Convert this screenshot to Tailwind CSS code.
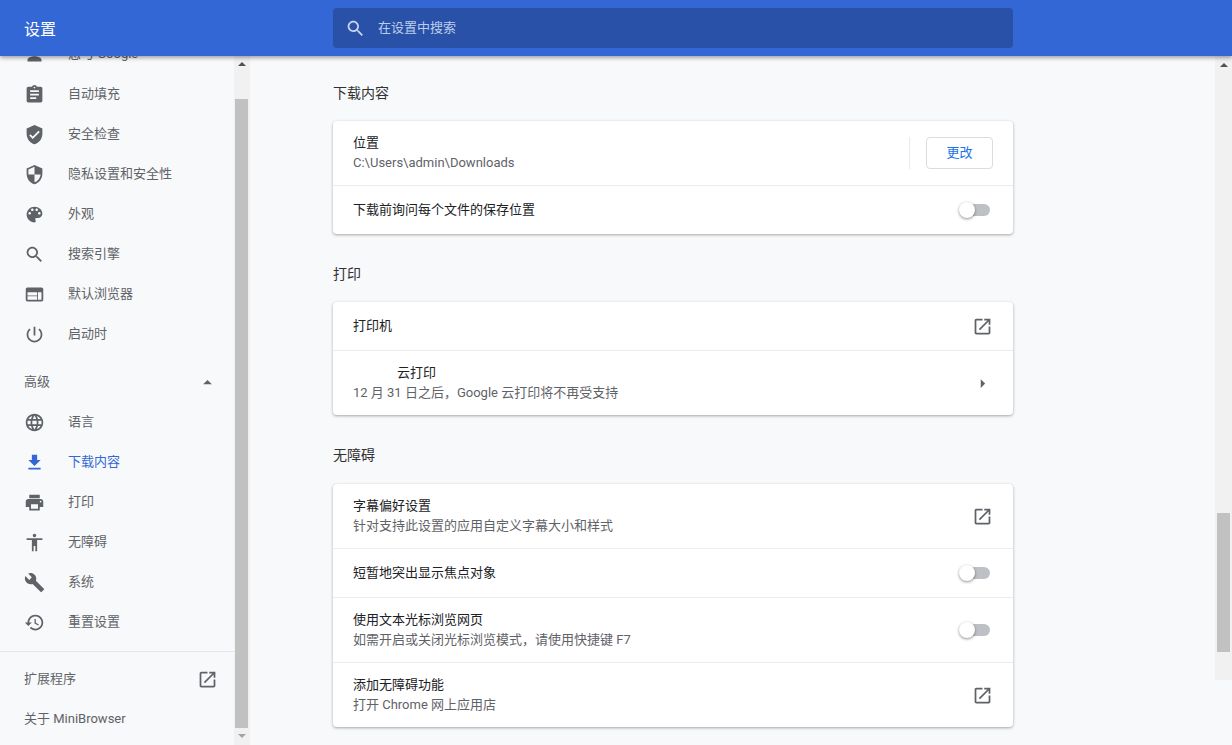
<!DOCTYPE html>
<html lang="zh">
<head>
<meta charset="utf-8">
<script src="https://cdn.jsdelivr.net/npm/@tailwindcss/browser@4"></script>
<title>设置</title>
</head>
<body class="h-[745px] w-[1232px] overflow-hidden bg-[#f8f9fa] font-['Roboto','Noto_Sans_CJK_SC',sans-serif] text-[13px] text-[#5f6368]">
<header class="relative z-10 flex h-14 items-center bg-[#3367d6] shadow-[0_2px_4px_rgba(0,0,0,0.35)]">
  <h1 class="w-[333px] pl-6 pt-1 text-base font-normal text-white">设置</h1>
  <div class="flex h-10 w-[680px] items-center rounded-sm bg-[#2a51a8]">
    <svg class="ml-3 h-[21px] w-[21px] fill-[#c6d4f0]" viewBox="0 0 24 24"><path d="M15.5 14h-.79l-.28-.27C15.41 12.59 16 11.11 16 9.5 16 5.91 13.09 3 9.5 3S3 5.91 3 9.5 5.91 16 9.5 16c1.61 0 3.09-.59 4.23-1.57l.27.28v.79l5 4.99L20.49 19l-4.99-5zm-6 0C7.01 14 5 11.99 5 9.5S7.01 5 9.5 5 14 7.01 14 9.5 11.99 14 9.5 14z"/></svg>
    <span class="ml-3 text-[#bccdec]">在设置中搜索</span>
  </div>
</header>
<div class="flex h-[689px]">
  <nav class="w-[234px] shrink-0 overflow-hidden">
    <div class="-mt-[22px]">
      <a class="flex h-10 items-center pl-6"><svg class="h-[21px] w-[21px] fill-[#5f6368]" viewBox="0 0 24 24"><path d="M12 12c2.21 0 4-1.79 4-4s-1.79-4-4-4-4 1.79-4 4 1.79 4 4 4zm0 2c-2.67 0-8 1.34-8 4v2h16v-2c0-2.66-5.33-4-8-4z"/></svg><span class="ml-[23px]">您与 Google</span></a>
      <a class="flex h-10 items-center pl-6"><svg class="h-[21px] w-[21px] fill-[#5f6368]" viewBox="0 0 24 24"><path d="M19 3h-4.18C14.4 1.84 13.3 1 12 1c-1.3 0-2.4.84-2.82 2H5c-1.1 0-2 .9-2 2v14c0 1.1.9 2 2 2h14c1.1 0 2-.9 2-2V5c0-1.1-.9-2-2-2zm-7 0c.55 0 1 .45 1 1s-.45 1-1 1-1-.45-1-1 .45-1 1-1zm2 14H7v-2h7v2zm3-4H7v-2h10v2zm0-4H7V7h10v2z"/></svg><span class="ml-[23px]">自动填充</span></a>
      <a class="flex h-10 items-center pl-6"><svg class="h-[21px] w-[21px] fill-[#5f6368]" viewBox="0 0 24 24"><path d="M12 1L3 5v6c0 5.55 3.84 10.74 9 12 5.16-1.26 9-6.45 9-12V5l-9-4zm-2 16l-4-4 1.41-1.41L10 14.17l6.59-6.59L18 9l-8 8z"/></svg><span class="ml-[23px]">安全检查</span></a>
      <a class="flex h-10 items-center pl-6"><svg class="h-[21px] w-[21px] fill-[#5f6368]" viewBox="0 0 24 24"><path d="M12 1L3 5v6c0 5.55 3.84 10.74 9 12 5.16-1.26 9-6.45 9-12V5l-9-4zm0 10.99h7c-.53 4.12-3.28 7.79-7 8.94V12H5V6.3l7-3.11v8.8z"/></svg><span class="ml-[23px]">隐私设置和安全性</span></a>
      <a class="flex h-10 items-center pl-6"><svg class="h-[21px] w-[21px] fill-[#5f6368]" viewBox="0 0 24 24"><path d="M12 3c-4.97 0-9 4.03-9 9s4.03 9 9 9c.83 0 1.5-.67 1.5-1.5 0-.39-.15-.74-.39-1.01-.23-.26-.38-.61-.38-.99 0-.83.67-1.5 1.5-1.5H16c2.76 0 5-2.24 5-5 0-4.42-4.03-8-9-8zm-5.5 9c-.83 0-1.5-.67-1.5-1.5S5.67 9 6.5 9 8 9.67 8 10.5 7.33 12 6.5 12zm3-4C8.67 8 8 7.33 8 6.5S8.67 5 9.5 5s1.5.67 1.5 1.5S10.33 8 9.5 8zm5 0c-.83 0-1.5-.67-1.5-1.5S13.67 5 14.5 5s1.5.67 1.5 1.5S15.33 8 14.5 8zm3 4c-.83 0-1.5-.67-1.5-1.5S16.67 9 17.5 9s1.5.67 1.5 1.5-.67 1.5-1.5 1.5z"/></svg><span class="ml-[23px]">外观</span></a>
      <a class="flex h-10 items-center pl-6"><svg class="h-[21px] w-[21px] fill-[#5f6368]" viewBox="0 0 24 24"><path d="M15.5 14h-.79l-.28-.27C15.41 12.59 16 11.11 16 9.5 16 5.91 13.09 3 9.5 3S3 5.91 3 9.5 5.91 16 9.5 16c1.61 0 3.09-.59 4.23-1.57l.27.28v.79l5 4.99L20.49 19l-4.99-5zm-6 0C7.01 14 5 11.99 5 9.5S7.01 5 9.5 5 14 7.01 14 9.5 11.99 14 9.5 14z"/></svg><span class="ml-[23px]">搜索引擎</span></a>
      <a class="flex h-10 items-center pl-6"><svg class="h-[21px] w-[21px] fill-[#5f6368]" viewBox="0 0 24 24"><path d="M20 4H4c-1.1 0-1.99.9-1.99 2L2 18c0 1.1.9 2 2 2h16c1.1 0 2-.9 2-2V6c0-1.1-.9-2-2-2zM4 18v-4h11v4H4zm0-5V9.5h11V13H4zm12 5V9.5h4V18h-4z"/></svg><span class="ml-[23px]">默认浏览器</span></a>
      <a class="flex h-10 items-center pl-6"><svg class="h-[21px] w-[21px] fill-[#5f6368]" viewBox="0 0 24 24"><path d="M13 3h-2v10h2V3zm4.83 2.17l-1.42 1.42C17.99 7.86 19 9.81 19 12c0 3.87-3.13 7-7 7s-7-3.13-7-7c0-2.19 1.01-4.14 2.58-5.42L6.17 5.17C4.23 6.82 3 9.26 3 12c0 4.97 4.03 9 9 9s9-4.03 9-9c0-2.74-1.23-5.18-3.17-6.83z"/></svg><span class="ml-[23px]">启动时</span></a>
      <div class="flex h-12 items-center justify-between pl-6 pr-4 pt-2"><span>高级</span><svg class="h-[21px] w-[21px] fill-[#5f6368]" viewBox="0 0 24 24"><path d="M7 14l5-5 5 5z"/></svg></div>
      <a class="flex h-10 items-center pl-6"><svg class="h-[21px] w-[21px] fill-[#5f6368]" viewBox="0 0 24 24"><path d="M11.99 2C6.47 2 2 6.48 2 12s4.47 10 9.99 10C17.52 22 22 17.52 22 12S17.52 2 11.99 2zm6.93 6h-2.95c-.32-1.25-.78-2.45-1.38-3.56 1.84.63 3.37 1.91 4.33 3.56zM12 4.04c.83 1.2 1.48 2.53 1.91 3.96h-3.82c.43-1.43 1.08-2.76 1.91-3.96zM4.26 14C4.1 13.36 4 12.69 4 12s.1-1.36.26-2h3.38c-.08.66-.14 1.32-.14 2 0 .68.06 1.34.14 2H4.26zm.82 2h2.95c.32 1.25.78 2.45 1.38 3.56-1.84-.63-3.37-1.9-4.33-3.56zm2.95-8H5.08c.96-1.66 2.49-2.93 4.33-3.56C8.81 5.55 8.35 6.75 8.03 8zM12 19.96c-.83-1.2-1.48-2.53-1.91-3.96h3.82c-.43 1.43-1.08 2.76-1.91 3.96zM14.34 14H9.66c-.09-.66-.16-1.32-.16-2 0-.68.07-1.35.16-2h4.68c.09.65.16 1.32.16 2 0 .68-.07 1.34-.16 2zm.25 5.56c.6-1.11 1.06-2.31 1.38-3.56h2.95c-.96 1.65-2.49 2.93-4.33 3.56zM16.36 14c.08-.66.14-1.32.14-2 0-.68-.06-1.34-.14-2h3.38c.16.64.26 1.31.26 2s-.1 1.36-.26 2h-3.38z"/></svg><span class="ml-[23px]">语言</span></a>
      <a class="flex h-10 items-center pl-6 text-[#3367d6]"><svg class="h-[21px] w-[21px] fill-[#3367d6]" viewBox="0 0 24 24"><path d="M19 9h-4V3H9v6H5l7 7 7-7zM5 18v2h14v-2H5z"/></svg><span class="ml-[23px]">下载内容</span></a>
      <a class="flex h-10 items-center pl-6"><svg class="h-[21px] w-[21px] fill-[#5f6368]" viewBox="0 0 24 24"><path d="M19 8H5c-1.66 0-3 1.34-3 3v6h4v4h12v-4h4v-6c0-1.66-1.34-3-3-3zm-3 11H8v-5h8v5zm3-7c-.55 0-1-.45-1-1s.45-1 1-1 1 .45 1 1-.45 1-1 1zm-1-9H6v4h12V3z"/></svg><span class="ml-[23px]">打印</span></a>
      <a class="flex h-10 items-center pl-6"><svg class="h-[21px] w-[21px] fill-[#5f6368]" viewBox="0 0 24 24"><path d="M12 2c1.1 0 2 .9 2 2s-.9 2-2 2-2-.9-2-2 .9-2 2-2zm9 7h-6v13h-2v-6h-2v6H9V9H3V7h18v2z"/></svg><span class="ml-[23px]">无障碍</span></a>
      <a class="flex h-10 items-center pl-6"><svg class="h-[21px] w-[21px] fill-[#5f6368]" viewBox="0 0 24 24"><path d="M22.7 19l-9.1-9.1c.9-2.3.4-5-1.5-6.9-2-2-5-2.4-7.4-1.3L9 6 6 9 1.6 4.7C.4 7.1.9 10.1 2.9 12.1c1.9 1.9 4.6 2.4 6.9 1.5l9.1 9.1c.4.4 1 .4 1.4 0l2.3-2.3c.5-.4.5-1.1.1-1.4z"/></svg><span class="ml-[23px]">系统</span></a>
      <a class="flex h-10 items-center pl-6"><svg class="h-[21px] w-[21px] fill-[#5f6368]" viewBox="0 0 24 24"><path d="M13 3c-4.97 0-9 4.03-9 9H1l3.89 3.89.07.14L9 12H6c0-3.87 3.13-7 7-7s7 3.13 7 7-3.13 7-7 7c-1.93 0-3.68-.79-4.94-2.06l-1.42 1.42C8.27 19.99 10.51 21 13 21c4.97 0 9-4.03 9-9s-4.03-9-9-9zm-1 5v5l4.28 2.54.72-1.21-3.5-2.08V8H12z"/></svg><span class="ml-[23px]">重置设置</span></a>
      <div class="mt-[9px] border-t border-[#e4e6e9]"></div>
      <div class="mt-[7px] flex h-10 items-center justify-between pl-6 pr-4"><span>扩展程序</span><svg class="h-[21px] w-[21px] fill-[#5f6368]" viewBox="0 0 24 24"><path d="M19 19H5V5h7V3H5c-1.11 0-2 .9-2 2v14c0 1.1.89 2 2 2h14c1.1 0 2-.9 2-2v-7h-2v7zM14 3v2h3.59l-9.83 9.83 1.41 1.41L19 6.41V10h2V3h-7z"/></svg></div>
      <div class="flex h-10 items-center pl-6"><span>关于 MiniBrowser</span></div>
    </div>
  </nav>
  <div class="flex w-4 shrink-0 flex-col items-center bg-[#f1f1f1] pt-[6px]">
    <div class="h-0 w-0 border-x-[4px] border-b-[4px] border-x-transparent border-b-[#505050]"></div>
    <div class="ml-px mt-[33px] h-[629px] w-[13px] self-start bg-[#c1c1c1]"></div>
    <div class="mt-[6px] h-0 w-0 border-x-[4px] border-t-[4px] border-x-transparent border-t-[#a3a3a3]"></div>
  </div>
  <main class="flex-1 overflow-hidden pl-[83px] pt-[27px]">
    <section class="w-[680px]">
      <h2 class="mb-[18px] h-5 text-sm leading-5 font-normal text-[#303134]">下载内容</h2>
      <div class="rounded bg-white shadow-[0_1px_3px_rgba(60,64,67,0.45)]">
        <div class="flex h-16 items-center pl-5 pr-5">
          <div class="flex-1 leading-5"><div class="text-[#202124]">位置</div><div>C:\Users\admin\Downloads</div></div>
          <div class="h-8 w-px bg-[#e8eaed]"></div>
          <button class="ml-4 h-8 w-[67px] rounded border border-[#dadce0] bg-white text-[#1a73e8]">更改</button>
        </div>
        <div class="flex h-[49px] items-center justify-between border-t border-[#ebedef] pl-5 pr-[23px]">
          <span class="text-[#202124]">下载前询问每个文件的保存位置</span>
          <div class="relative h-3 w-[30px] rounded-full bg-[#bdc1c6]"><div class="absolute -left-px -top-0.5 h-4 w-4 rounded-full bg-white shadow-[0_1px_3px_rgba(0,0,0,0.45)]"></div></div>
        </div>
      </div>
      <h2 class="mb-[18px] mt-[30px] h-5 text-sm leading-5 font-normal text-[#303134]">打印</h2>
      <div class="rounded bg-white shadow-[0_1px_3px_rgba(60,64,67,0.45)]">
        <div class="flex h-12 items-center justify-between pl-5 pr-5">
          <span class="text-[#202124]">打印机</span>
          <svg class="h-[21px] w-[21px] fill-[#5f6368]" viewBox="0 0 24 24"><path d="M19 19H5V5h7V3H5c-1.11 0-2 .9-2 2v14c0 1.1.89 2 2 2h14c1.1 0 2-.9 2-2v-7h-2v7zM14 3v2h3.59l-9.83 9.83 1.41 1.41L19 6.41V10h2V3h-7z"/></svg>
        </div>
        <div class="flex h-[65px] items-center justify-between border-t border-[#ebedef] pl-5 pr-5">
          <div class="leading-5"><div class="pl-[44px] text-[#202124]">云打印</div><div>12 月 31 日之后，Google 云打印将不再受支持</div></div>
          <svg class="h-[21px] w-[21px] fill-[#5f6368]" viewBox="0 0 24 24"><path d="M10 17l5-5-5-5v10z"/></svg>
        </div>
      </div>
      <h2 class="mb-[19px] mt-[30px] h-5 text-sm leading-5 font-normal text-[#303134]">无障碍</h2>
      <div class="rounded bg-white shadow-[0_1px_3px_rgba(60,64,67,0.45)]">
        <div class="flex h-16 items-center justify-between pl-5 pr-5">
          <div class="leading-5"><div class="text-[#202124]">字幕偏好设置</div><div>针对支持此设置的应用自定义字幕大小和样式</div></div>
          <svg class="h-[21px] w-[21px] fill-[#5f6368]" viewBox="0 0 24 24"><path d="M19 19H5V5h7V3H5c-1.11 0-2 .9-2 2v14c0 1.1.89 2 2 2h14c1.1 0 2-.9 2-2v-7h-2v7zM14 3v2h3.59l-9.83 9.83 1.41 1.41L19 6.41V10h2V3h-7z"/></svg>
        </div>
        <div class="flex h-[49px] items-center justify-between border-t border-[#ebedef] pl-5 pr-[23px]">
          <span class="text-[#202124]">短暂地突出显示焦点对象</span>
          <div class="relative h-3 w-[30px] rounded-full bg-[#bdc1c6]"><div class="absolute -left-px -top-0.5 h-4 w-4 rounded-full bg-white shadow-[0_1px_3px_rgba(0,0,0,0.45)]"></div></div>
        </div>
        <div class="flex h-[65px] items-center justify-between border-t border-[#ebedef] pl-5 pr-[23px]">
          <div class="leading-5"><div class="text-[#202124]">使用文本光标浏览网页</div><div>如需开启或关闭光标浏览模式，请使用快捷键 F7</div></div>
          <div class="relative h-3 w-[30px] rounded-full bg-[#bdc1c6]"><div class="absolute -left-px -top-0.5 h-4 w-4 rounded-full bg-white shadow-[0_1px_3px_rgba(0,0,0,0.45)]"></div></div>
        </div>
        <div class="flex h-[65px] items-center justify-between border-t border-[#ebedef] pl-5 pr-5">
          <div class="leading-5"><div class="text-[#202124]">添加无障碍功能</div><div>打开 Chrome 网上应用店</div></div>
          <svg class="h-[21px] w-[21px] fill-[#5f6368]" viewBox="0 0 24 24"><path d="M19 19H5V5h7V3H5c-1.11 0-2 .9-2 2v14c0 1.1.89 2 2 2h14c1.1 0 2-.9 2-2v-7h-2v7zM14 3v2h3.59l-9.83 9.83 1.41 1.41L19 6.41V10h2V3h-7z"/></svg>
        </div>
      </div>
    </section>
  </main>
  <div class="flex h-[624px] w-[17px] shrink-0 flex-col items-center bg-[#f1f1f1] pt-[7px]">
    <div class="h-0 w-0 border-x-[4px] border-b-[4px] border-x-transparent border-b-[#505050]"></div>
    <div class="mt-[446px] h-[139px] w-[13px] bg-[#c1c1c1]"></div>
  </div>
</div>
</body>
</html>
